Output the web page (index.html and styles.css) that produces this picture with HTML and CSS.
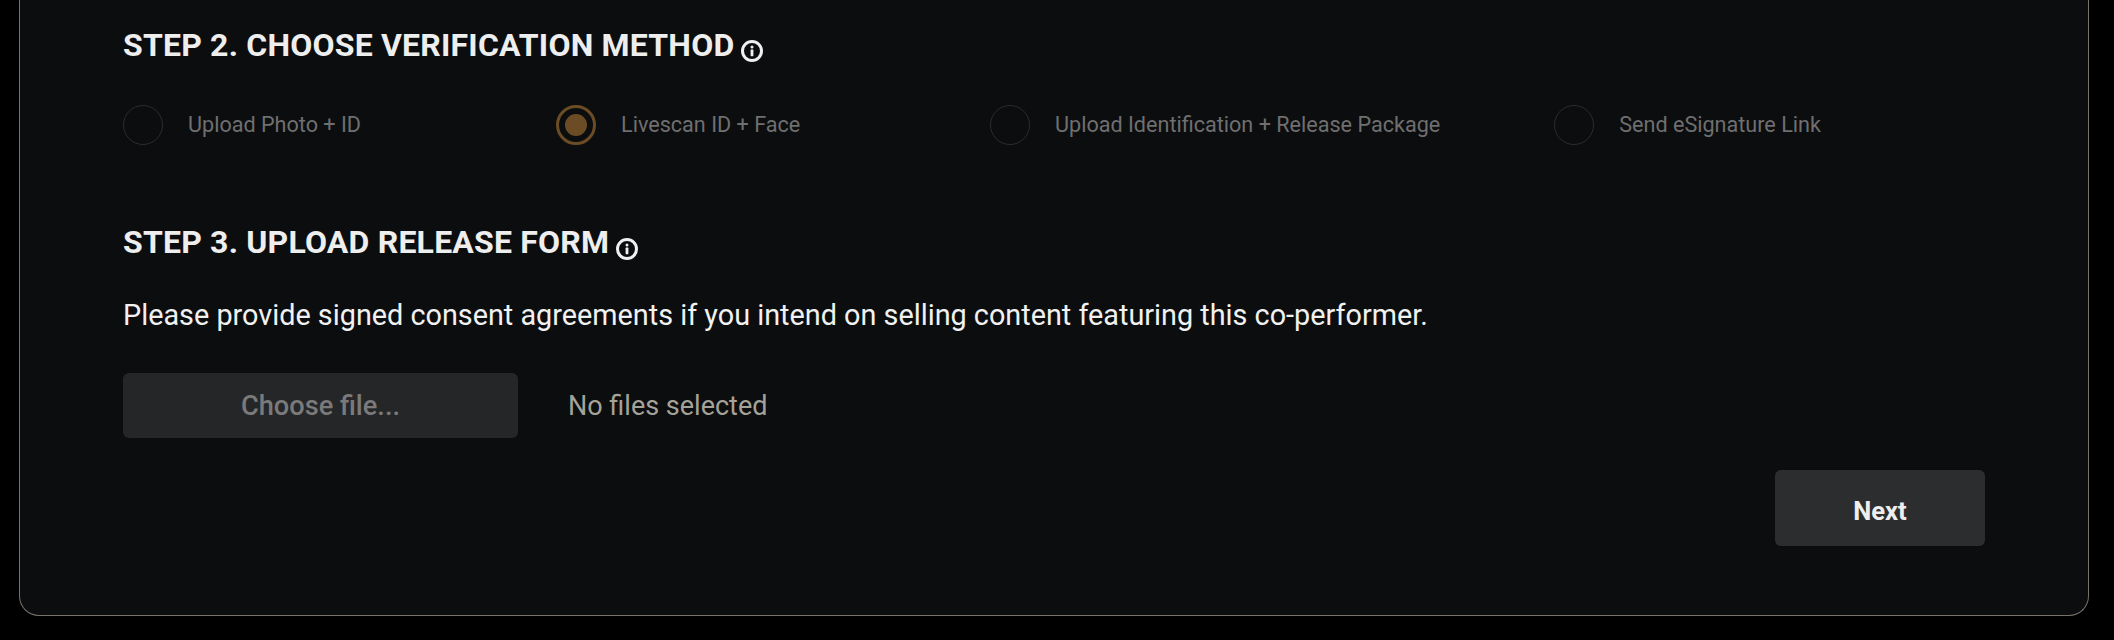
FILE: index.html
```html
<!DOCTYPE html>
<html lang="en">
<head>
<meta charset="utf-8">
<title>Verification</title>
<link rel="stylesheet" href="styles.css">
</head>
<body>
<main class="card">
  <section class="step step-two">
    <h2 class="step-title">STEP 2. CHOOSE VERIFICATION METHOD
      <svg class="info" viewBox="0 0 22 22" aria-hidden="true"><circle cx="11" cy="11" r="9.5"/><rect x="9.6" y="9.6" width="2.8" height="6.6" rx="0.6"/><circle class="dot" cx="11" cy="6.9" r="1.5"/></svg>
    </h2>
    <div class="methods">
      <label class="method"><span class="radio"></span><span class="method-text">Upload Photo + ID</span></label>
      <label class="method"><span class="radio radio-on"></span><span class="method-text">Livescan ID + Face</span></label>
      <label class="method"><span class="radio"></span><span class="method-text">Upload Identification + Release Package</span></label>
      <label class="method"><span class="radio"></span><span class="method-text">Send eSignature Link</span></label>
    </div>
  </section>
  <section class="step step-three">
    <h2 class="step-title">STEP 3. UPLOAD RELEASE FORM
      <svg class="info" viewBox="0 0 22 22" aria-hidden="true"><circle cx="11" cy="11" r="9.5"/><rect x="9.6" y="9.6" width="2.8" height="6.6" rx="0.6"/><circle class="dot" cx="11" cy="6.9" r="1.5"/></svg>
    </h2>
    <p class="desc">Please provide signed consent agreements if you intend on selling content featuring this co-performer.</p>
    <div class="file-row">
      <button class="choose" type="button">Choose file...</button>
      <span class="no-files">No files selected</span>
    </div>
  </section>
  <div class="actions"><button class="next" type="button">Next</button></div>
</main>
</body>
</html>
```

FILE: styles.css
```css
* { box-sizing: border-box; }
html, body { margin: 0; height: 640px; overflow: hidden; background: #000; }
body { font-family: Roboto, "Liberation Sans", sans-serif; padding: 0 25px 24px 19px; display: flex; flex-direction: column; justify-content: flex-end; }
.card {
  height: 616px;
  background: #0c0d0f;
  border: 1px solid #77736a;
  border-top: none;
  border-radius: 0 0 20px 20px;
  padding: 0 103px 0 103px;
  display: flex;
  flex-direction: column;
}
.step-two { padding-top: 23px; }
.step-title {
  margin: 0;
  font-size: 32px;
  line-height: 44px;
  font-weight: 700;
  letter-spacing: 0.2px;
  color: #eeeeee;
  display: flex;
  align-items: flex-start;
  gap: 7px;
}
.info { width: 22px; height: 22px; margin-top: 17px; flex: none; }
.step-three .info { margin-top: 18px; }
.info circle { fill: none; stroke: #f0f0f0; stroke-width: 3; }
.info rect, .info .dot { fill: #f0f0f0; stroke: none; }
.methods { display: flex; margin-top: 38px; }
.method {
  flex: none;
  display: flex;
  align-items: center;
  gap: 25px;
  min-width: 433px;
  padding-right: 114px;
}
.method:nth-child(2) { min-width: 434px; }
.radio {
  width: 40px;
  height: 40px;
  flex: none;
  border-radius: 50%;
  border: 1px solid #2b2c2e;
  display: flex;
  align-items: center;
  justify-content: center;
}
.radio-on { border: 3px solid #6b4c24; }
.radio-on::before { content: ""; width: 22px; height: 22px; border-radius: 50%; background: #6b4c24; }
.method-text { font-size: 21.6px; color: #6f6f6f; line-height: 40px; white-space: nowrap; }
.step-three { margin-top: 75px; }
.desc { margin: 31px 0 0; font-size: 28.8px; line-height: 40px; color: #f1f1f1; }
.file-row { display: flex; align-items: center; gap: 50px; margin-top: 38px; }
.choose {
  width: 395px;
  height: 65px;
  border: none;
  border-radius: 6px;
  background: #252628;
  color: #7a7a7a;
  font: 500 27.2px Roboto, sans-serif;
}
.no-files { font-size: 27px; color: #a5a299; }
.actions { display: flex; justify-content: flex-end; margin-top: 32px; }
.next {
  width: 210px;
  height: 76px;
  border: none;
  border-radius: 6px;
  padding: 5px 0 0;
  background: #2c2d2f;
  color: #eeeeee;
  font: 700 25.6px Roboto, sans-serif;
}
```
